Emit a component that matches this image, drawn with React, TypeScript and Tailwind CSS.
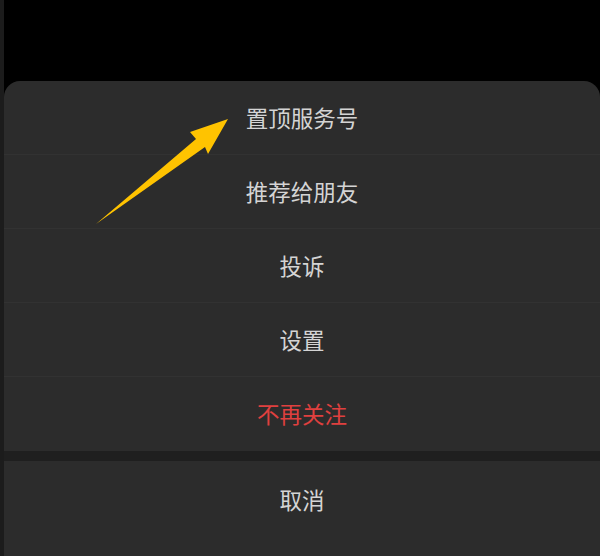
import React from "react";

const items = [
  { label: "置顶服务号", red: false },
  { label: "推荐给朋友", red: false },
  { label: "投诉", red: false },
  { label: "设置", red: false },
  { label: "不再关注", red: true },
];

export default function App() {
  return (
    <div
      className="relative flex h-[556px] w-[600px] overflow-hidden bg-black"
      style={{ fontFamily: '"Noto Sans CJK SC", "Noto Sans", sans-serif' }}
    >
      <div className="h-full w-[4px] shrink-0 bg-[#1c1c1c]" />
      <div className="flex flex-1 flex-col">
        <div className="h-[81px] shrink-0 bg-black" />
        <div className="flex flex-1 flex-col overflow-hidden rounded-t-[16px] bg-[#2c2c2c]">
          {items.map((it, i) => (
            <div
              key={it.label}
              className={`flex h-[74px] shrink-0 items-center justify-center text-[22.5px] ${
                i < items.length - 1 ? "border-b border-[#323232]" : ""
              } ${it.red ? "text-[#e0403f]" : "text-[#d4d4d4]"}`}
            >
              {it.label}
            </div>
          ))}
          <div className="h-[10px] shrink-0 bg-[#1f1f1f]" />
          <div className="flex h-[78px] shrink-0 items-center justify-center text-[22.5px] text-[#d4d4d4]">
            取消
          </div>
          <div className="flex-1" />
        </div>
      </div>
      <svg
        className="pointer-events-none absolute left-0 top-0"
        width="600"
        height="556"
        viewBox="0 0 600 556"
      >
        <polygon
          points="96,224 196,139 190,132 228,119 208,154 205,147"
          fill="#ffc300"
        />
      </svg>
    </div>
  );
}
